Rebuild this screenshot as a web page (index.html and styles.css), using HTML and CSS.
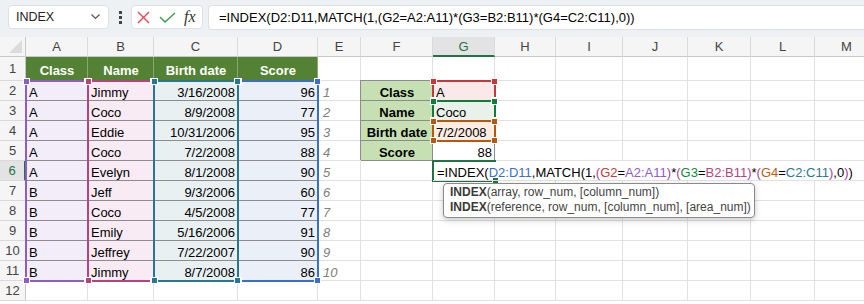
FILE: index.html
```html
<!DOCTYPE html>
<html lang="en">
<head>
  <meta charset="UTF-8" />
  <title>INDEX MATCH multiple criteria</title>
  <link rel="stylesheet" href="styles.css">
</head>
<body>
  <div class="topbar">
    <div class="namebox">
      <span>INDEX</span>
      <svg width="9" height="6" viewBox="0 0 9 6"><polyline points="0.5,0.5 4.5,4.5 8.5,0.5" fill="none" stroke="#555" stroke-width="1.2"/></svg>
    </div>
    <div class="dots">
      <svg width="3" height="13" viewBox="0 0 3 13"><rect x="0" y="0" width="3" height="3" fill="#444"/><rect x="0" y="5" width="3" height="3" fill="#444"/><rect x="0" y="10" width="3" height="3" fill="#444"/></svg>
    </div>
    <div class="fnbox">
      <svg width="13" height="13" viewBox="0 0 13 13"><path d="M1 1 L12 12 M12 1 L1 12" stroke="#e5484d" stroke-width="1.4" fill="none"/></svg>
      <svg class="ok" width="17" height="11" viewBox="0 0 17 11"><polyline points="1,5 6,10 16,1" fill="none" stroke="#3b9a4c" stroke-width="1.4"/></svg>
      <span class="fx">fx</span>
    </div>
    <div class="formula">=INDEX(D2:D11,MATCH(1,(G2=A2:A11)*(G3=B2:B11)*(G4=C2:C11),0))</div>
  </div>

  <div class="sheet">
    <div class="grid">
      <!-- column headers -->
      <div class="c corner"></div>
      <div class="c ch">A</div><div class="c ch">B</div><div class="c ch">C</div><div class="c ch">D</div>
      <div class="c ch">E</div><div class="c ch">F</div><div class="c ch sel">G</div><div class="c ch">H</div>
      <div class="c ch">I</div><div class="c ch">J</div><div class="c ch">K</div><div class="c ch">L</div><div class="c ch">M</div>

      <!-- row 1 -->
      <div class="c rh">1</div>
      <div class="c hd">Class</div><div class="c hd">Name</div><div class="c hd">Birth date</div><div class="c hd">Score</div>
      <div class="c"></div><div class="c"></div><div class="c"></div><div class="c"></div><div class="c"></div>
      <div class="c"></div><div class="c"></div><div class="c"></div><div class="c"></div>

      <!-- row 2 -->
      <div class="c rh">2</div>
      <div class="c tb col-a">A</div><div class="c tb col-b">Jimmy</div><div class="c tb col-c num">3/16/2008</div><div class="c tb col-d num">96</div>
      <div class="c idx">1</div><div class="c lk">Class</div><div class="c lv fill-r">A</div>
      <div class="c"></div><div class="c"></div><div class="c"></div><div class="c"></div><div class="c"></div><div class="c"></div>

      <!-- row 3 -->
      <div class="c rh">3</div>
      <div class="c tb col-a">A</div><div class="c tb col-b">Coco</div><div class="c tb col-c num">8/9/2008</div><div class="c tb col-d num">77</div>
      <div class="c idx">2</div><div class="c lk">Name</div><div class="c lv fill-g">Coco</div>
      <div class="c"></div><div class="c"></div><div class="c"></div><div class="c"></div><div class="c"></div><div class="c"></div>

      <!-- row 4 -->
      <div class="c rh">4</div>
      <div class="c tb col-a">A</div><div class="c tb col-b">Eddie</div><div class="c tb col-c num">10/31/2006</div><div class="c tb col-d num">95</div>
      <div class="c idx">3</div><div class="c lk">Birth date</div><div class="c lv fill-o">7/2/2008</div>
      <div class="c"></div><div class="c"></div><div class="c"></div><div class="c"></div><div class="c"></div><div class="c"></div>

      <!-- row 5 -->
      <div class="c rh">5</div>
      <div class="c tb col-a">A</div><div class="c tb col-b">Coco</div><div class="c tb col-c num">7/2/2008</div><div class="c tb col-d num">88</div>
      <div class="c idx">4</div><div class="c lk">Score</div><div class="c lv num">88</div>
      <div class="c"></div><div class="c"></div><div class="c"></div><div class="c"></div><div class="c"></div><div class="c"></div>

      <!-- row 6 (editing G6) -->
      <div class="c rh sel">6</div>
      <div class="c tb col-a">A</div><div class="c tb col-b">Evelyn</div><div class="c tb col-c num">8/1/2008</div><div class="c tb col-d num">90</div>
      <div class="c idx">5</div><div class="c"></div>
      <div class="c edit">
        <span>=INDEX(<span class="r-blue">D2:D11</span>,MATCH(1,<span class="pr">(</span><span class="r-red">G2</span>=<span class="r-purple">A2:A11</span><span class="pr">)</span>*<span class="pr">(</span><span class="r-green">G3</span>=<span class="r-magenta">B2:B11</span><span class="pr">)</span>*<span class="pr">(</span><span class="r-orange">G4</span>=<span class="r-teal">C2:C11</span><span class="pr">)</span>,0<span class="pr">)</span>)</span>
        <div class="tip">
          <div><b>INDEX</b>(array, row_num, [column_num])</div>
          <div><b>INDEX</b>(reference, row_num, [column_num], [area_num])</div>
        </div>
      </div>

      <!-- row 7 -->
      <div class="c rh">7</div>
      <div class="c tb col-a">B</div><div class="c tb col-b">Jeff</div><div class="c tb col-c num">9/3/2006</div><div class="c tb col-d num">60</div>
      <div class="c idx">6</div>
      <div class="c"></div><div class="c"></div><div class="c"></div><div class="c"></div><div class="c"></div><div class="c"></div><div class="c"></div><div class="c"></div>

      <!-- row 8 -->
      <div class="c rh">8</div>
      <div class="c tb col-a">B</div><div class="c tb col-b">Coco</div><div class="c tb col-c num">4/5/2008</div><div class="c tb col-d num">77</div>
      <div class="c idx">7</div>
      <div class="c"></div><div class="c"></div><div class="c"></div><div class="c"></div><div class="c"></div><div class="c"></div><div class="c"></div><div class="c"></div>

      <!-- row 9 -->
      <div class="c rh">9</div>
      <div class="c tb col-a">B</div><div class="c tb col-b">Emily</div><div class="c tb col-c num">5/16/2006</div><div class="c tb col-d num">91</div>
      <div class="c idx">8</div>
      <div class="c"></div><div class="c"></div><div class="c"></div><div class="c"></div><div class="c"></div><div class="c"></div><div class="c"></div><div class="c"></div>

      <!-- row 10 -->
      <div class="c rh">10</div>
      <div class="c tb col-a">B</div><div class="c tb col-b">Jeffrey</div><div class="c tb col-c num">7/22/2007</div><div class="c tb col-d num">90</div>
      <div class="c idx">9</div>
      <div class="c"></div><div class="c"></div><div class="c"></div><div class="c"></div><div class="c"></div><div class="c"></div><div class="c"></div><div class="c"></div>

      <!-- row 11 -->
      <div class="c rh">11</div>
      <div class="c tb col-a">B</div><div class="c tb col-b">Jimmy</div><div class="c tb col-c num">8/7/2008</div><div class="c tb col-d num">86</div>
      <div class="c idx">10</div>
      <div class="c"></div><div class="c"></div><div class="c"></div><div class="c"></div><div class="c"></div><div class="c"></div><div class="c"></div><div class="c"></div>

      <!-- row 12 -->
      <div class="c rh">12</div>
      <div class="c"></div><div class="c"></div><div class="c"></div><div class="c"></div><div class="c"></div><div class="c"></div>
      <div class="c"></div><div class="c"></div><div class="c"></div><div class="c"></div><div class="c"></div><div class="c"></div><div class="c"></div>
    </div>

    <!-- reference highlights drawn over the cells -->
    <div class="marks">
      <div class="rng rng-a"><i class="h tl"></i><i class="h tr"></i><i class="h bl"></i><i class="h br"></i></div>
      <div class="rng rng-b"><i class="h tl"></i><i class="h tr"></i><i class="h bl"></i><i class="h br"></i></div>
      <div class="rng rng-d"><i class="h tl"></i><i class="h tr"></i><i class="h bl"></i><i class="h br"></i></div>
      <div class="rng rng-c"><i class="h tl"></i><i class="h tr"></i><i class="h bl"></i><i class="h br"></i></div>
      <div class="rng rng-g2"><i class="h tl"></i><i class="h tr"></i><i class="h bl"></i><i class="h br"></i></div>
      <div class="rng rng-g3"><i class="h tl"></i><i class="h tr"></i><i class="h bl"></i><i class="h br"></i></div>
      <div class="rng rng-g4"><i class="h tl"></i><i class="h tr"></i><i class="h bl"></i><i class="h br"></i></div>
      <div class="active"><i class="h br"></i></div>
    </div>
  </div>
</body>
</html>
```

FILE: styles.css
```css
body {
  margin: 0;
  background: #fff;
  font-family: "Liberation Sans", Arial, sans-serif;
  font-size: 13px;
  color: #000;
}

/* formula bar */
.topbar {
  display: flex;
  height: 37px;
  box-sizing: border-box;
  padding: 5px 0 0 8px;
  background: #eef1f4;
}
.namebox {
  width: 101px;
  height: 24px;
  box-sizing: border-box;
  display: flex;
  align-items: center;
  justify-content: space-between;
  padding: 0 8px 0 7px;
  background: #fff;
  border: 1px solid #dde1e6;
  border-radius: 4px;
  font-size: 12.5px;
  color: #222;
}
.dots {
  width: 22px;
  height: 24px;
  display: flex;
  align-items: center;
  justify-content: center;
}
.fnbox {
  width: 72px;
  height: 24px;
  box-sizing: border-box;
  display: flex;
  align-items: center;
  padding-left: 5px;
  background: #fff;
  border: 1px solid #dde1e6;
  border-radius: 4px;
}
.fnbox .ok {
  margin-left: 9px;
}
.fx {
  margin-left: 8px;
  font-family: "Liberation Serif", "Times New Roman", serif;
  font-style: italic;
  font-size: 16px;
  color: #333;
}
.formula {
  flex: 1;
  height: 25px;
  box-sizing: border-box;
  margin-left: 5px;
  display: flex;
  align-items: center;
  padding-left: 10px;
  background: #fff;
  border: 1px solid #dde1e6;
  border-right: 0;
  border-radius: 4px 0 0 4px;
  white-space: nowrap;
}

/* sheet */
.sheet {
  position: relative;
}
.grid,
.marks {
  display: grid;
  grid-template-columns: 26px 62px 66px 84px 80px 43px 72px 62px 61px 67px 65px 63px 64px 64px;
  grid-template-rows: 20px 24px repeat(11, 20px);
}
.marks {
  position: absolute;
  top: 0;
  left: 0;
  right: 0;
  bottom: 0;
  z-index: 1;
  pointer-events: none;
}
.c {
  box-sizing: border-box;
  display: flex;
  align-items: flex-end;
  padding: 0 2px 0 3px;
  line-height: 15px;
  white-space: nowrap;
  overflow: hidden;
  border-right: 1px solid #e1e1e1;
  border-bottom: 1px solid #e1e1e1;
}
.num {
  justify-content: flex-end;
}

.corner {
  position: relative;
  background: #f5f5f5;
  border-right-color: #c8c8c8;
  border-bottom-color: #c8c8c8;
}
.corner::after {
  content: "";
  position: absolute;
  right: 3px;
  bottom: 3px;
  border-left: 13px solid transparent;
  border-bottom: 13px solid #dcdcdc;
}
.ch,
.rh {
  align-items: center;
  justify-content: center;
  padding: 0;
  background: #f5f5f5;
  color: #444;
  line-height: 1;
}
.ch {
  border-right-color: #dadada;
  border-bottom-color: #c8c8c8;
}
.rh {
  border-right-color: #c8c8c8;
  border-bottom-color: #dadada;
}
.ch.sel {
  background: #e3e3e3;
  color: #217346;
  border-bottom: 2px solid #217346;
}
.rh.sel {
  background: #e3e3e3;
  color: #217346;
  border-right: 2px solid #217346;
}

/* source table */
.hd {
  justify-content: center;
  padding-bottom: 2px;
  background: #548235;
  color: #fff;
  font-weight: bold;
  border-right-color: #8aa672;
  border-bottom-color: #8c8c8c;
}
.tb {
  border-right-color: #8c8c8c;
  border-bottom-color: #8c8c8c;
}
.col-a { background: #f2edf8; }
.col-b { background: #f8ebf3; }
.col-c { background: #e9f0f2; }
.col-d { background: #eaeff8; }

.idx {
  padding-left: 5px;
  color: #808080;
  font-style: italic;
}

/* lookup block */
.lk,
.lv {
  border-right-color: #8c8c8c;
  border-bottom-color: #8c8c8c;
  box-shadow: -1px -1px 0 #8c8c8c;
}
.lk {
  justify-content: center;
  background: #c6e0b4;
  font-weight: bold;
}
.fill-r { background: #fbe9e9; }
.fill-g { background: #e8f2ea; }
.fill-o { background: #fcece2; }

/* cell being edited */
.edit {
  grid-column: span 7;
  position: relative;
  z-index: 2;
  overflow: visible;
  padding-left: 4px;
  border-right: 0;
  background: transparent;
}
.r-blue { color: #3a6fc9; }
.r-red { color: #c8373a; }
.r-purple { color: #8e5cc4; }
.r-green { color: #118a3c; }
.r-magenta { color: #b5437f; }
.r-orange { color: #b8600f; }
.r-teal { color: #2a7a92; }
.pr { color: #a0449a; }

.tip {
  position: absolute;
  top: 22px;
  left: 10px;
  width: 312px;
  box-sizing: border-box;
  padding: 1px 6px 2px;
  background: #fff;
  border: 1px solid #8a8a8a;
  border-radius: 4px;
  box-shadow: 0 2px 6px rgba(0, 0, 0, 0.22);
  font-size: 12px;
  line-height: 15px;
  color: #444;
}
.tip b {
  color: #3a3a3a;
}

/* range highlights */
.rng,
.active {
  position: relative;
  margin: -1px;
  border: 2px solid currentColor;
}
.rng-a { grid-column: 2; grid-row: 3 / 13; color: #8e5cc4; }
.rng-b { grid-column: 3; grid-row: 3 / 13; color: #b5437f; }
.rng-d { grid-column: 5; grid-row: 3 / 13; color: #3a6fc9; }
.rng-c { grid-column: 4; grid-row: 3 / 13; color: #2a7590; }
.rng-g2 { grid-column: 8; grid-row: 3; color: #c8373a; }
.rng-g3 { grid-column: 8; grid-row: 4; color: #107c3a; }
.rng-g4 { grid-column: 8; grid-row: 5; color: #b35a10; }
.active {
  grid-column: 8;
  grid-row: 7;
  color: #217346;
  border-right: 0;
}
.h {
  position: absolute;
  width: 5px;
  height: 5px;
  background: currentColor;
  border: 1px solid #fff;
}
.tl { top: -4px; left: -4px; }
.tr { top: -4px; right: -4px; }
.bl { bottom: -4px; left: -4px; }
.br { bottom: -4px; right: -4px; }
.active .br { right: -3px; }
```
